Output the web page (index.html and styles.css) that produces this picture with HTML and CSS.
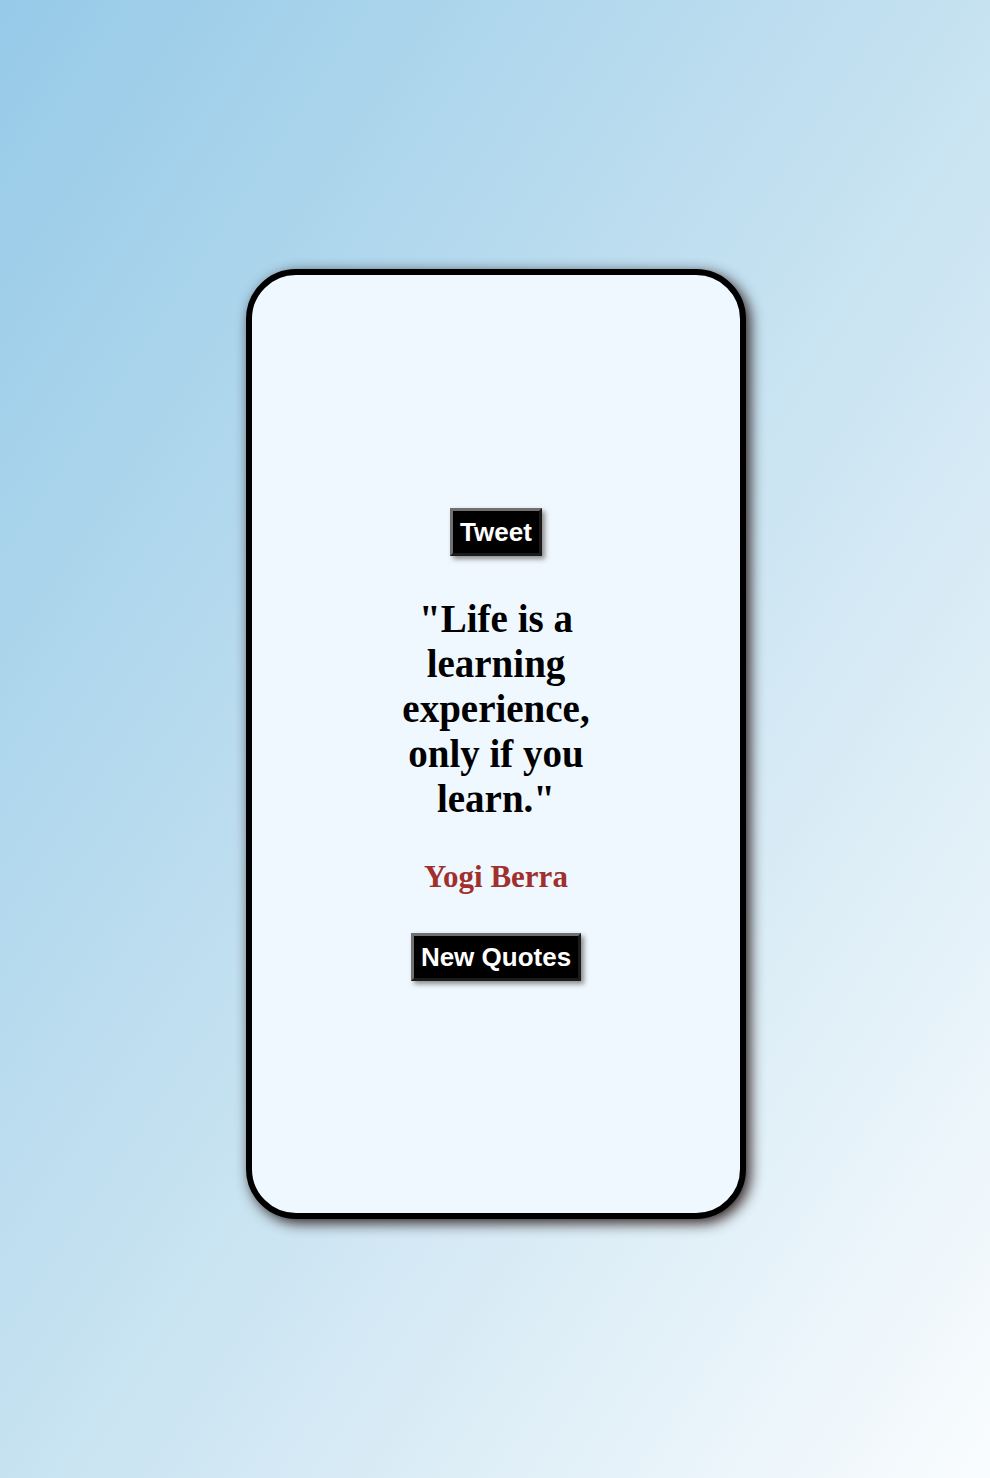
FILE: index.html
```html
<!DOCTYPE html>
<html lang="en">
<head>
<meta charset="utf-8">
<title>Random Quotes</title>
<link rel="stylesheet" href="styles.css">
</head>
<body>
<main class="page">
  <section class="card">
    <button class="btn btn-tweet">Tweet</button>
    <p class="quote">"Life is a learning experience, only if you learn."</p>
    <p class="author">Yogi Berra</p>
    <button class="btn btn-new">New Quotes</button>
  </section>
</main>
</body>
</html>
```

FILE: styles.css
```css
html, body {
  margin: 0;
  padding: 0;
}
body {
  width: 990px;
  height: 1478px;
  background: linear-gradient(to bottom right, #96cae8 0%, #c6e2f1 50%, #f9fcfe 100%);
  font-family: "Liberation Serif", "Times New Roman", serif;
}
.page {
  height: 1478px;
  display: flex;
  align-items: center;
  justify-content: center;
}
.card {
  box-sizing: border-box;
  width: 500px;
  height: 950px;
  margin-left: 2px;
  margin-top: 10px;
  background: #f0f8ff;
  border: 6px solid #000;
  border-radius: 50px;
  box-shadow: 4px 4px 14px #2e2020;
  display: flex;
  flex-direction: column;
  align-items: center;
  justify-content: center;
}
.btn {
  font-family: "Liberation Sans", Arial, sans-serif;
  font-weight: bold;
  font-size: 26px;
  line-height: 30px;
  color: #fff;
  background: #000;
  border: 3px outset #707070;
  padding: 6px 7px;
  box-shadow: 3px 3px 5px #8a8a8a;
  cursor: pointer;
}
.quote {
  width: 200px;
  margin: 40px 0 0;
  text-align: center;
  font-weight: bold;
  font-size: 39px;
  line-height: 45px;
  color: #000;
}
.author {
  margin: 38px 0 0;
  font-weight: bold;
  font-size: 31px;
  line-height: 36px;
  color: #a0302d;
}
.btn-new {
  margin-top: 38px;
}
```
